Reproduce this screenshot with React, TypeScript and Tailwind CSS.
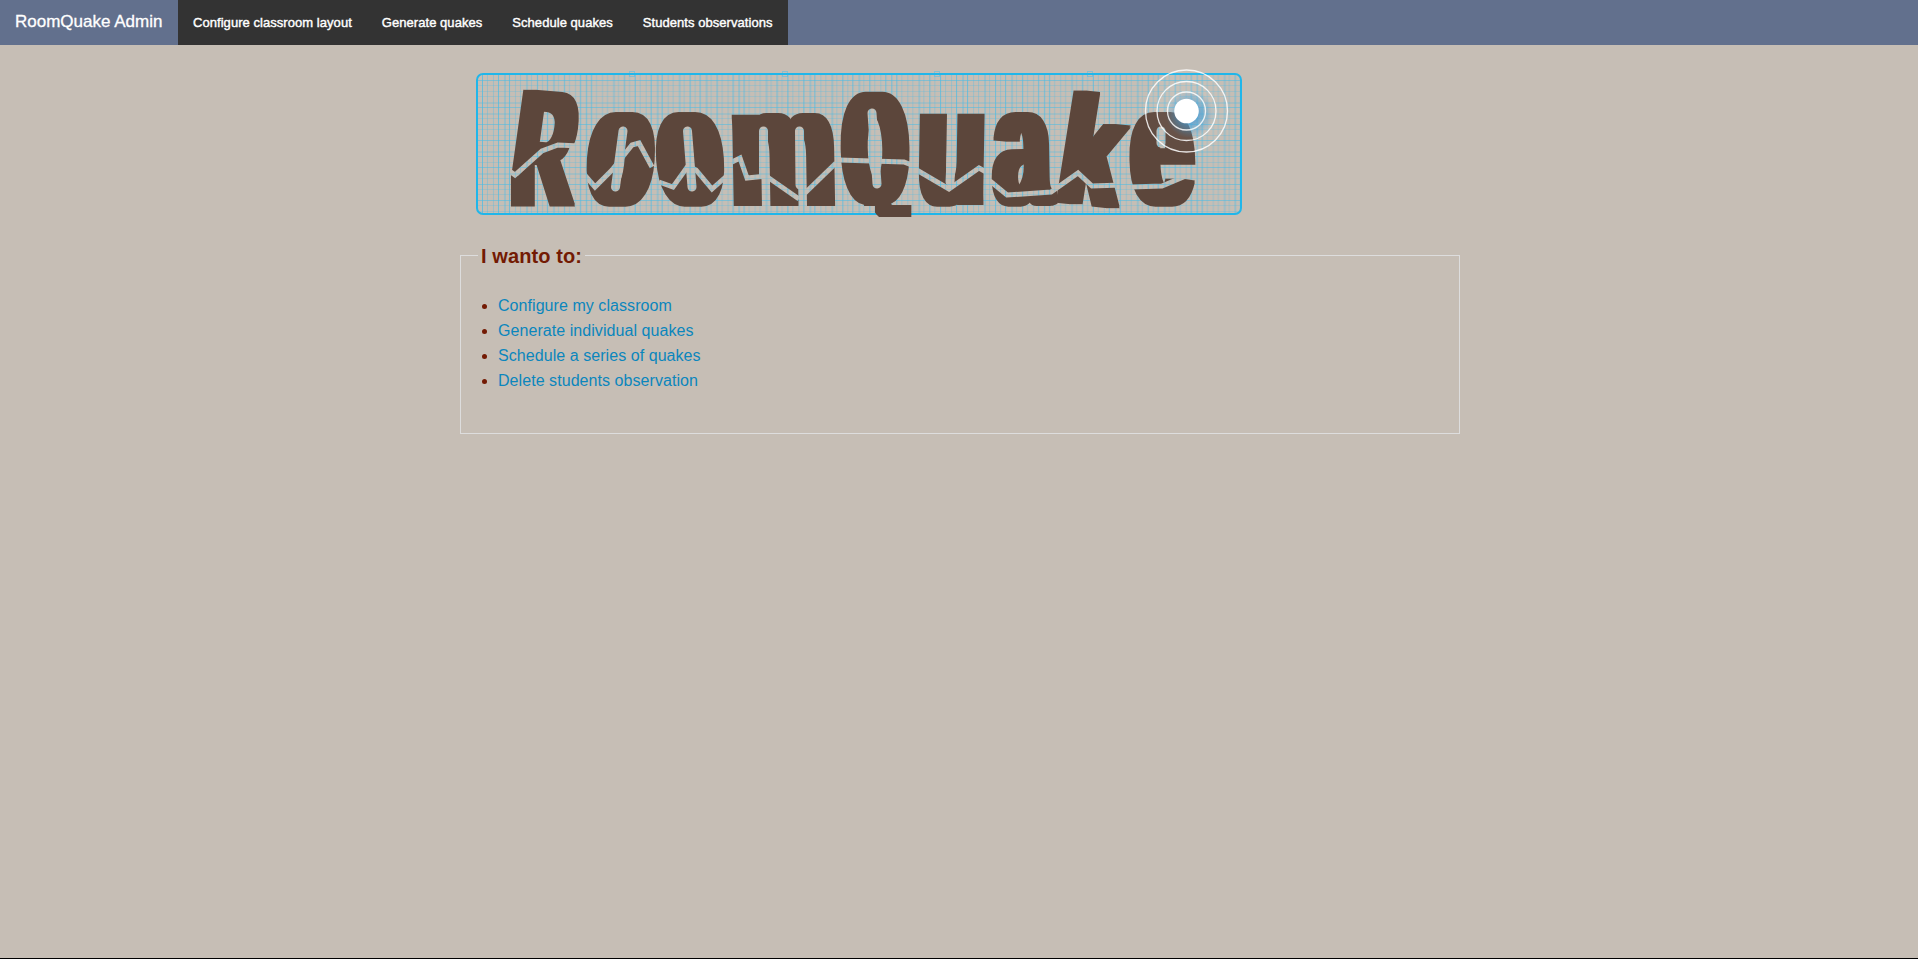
const INK = '#5c463b';

type Glyph = {
  c: string;
  x: number;
  y: number;
  sx: number;
  sy: number;
  r?: number;
  k?: number;
  w?: 'a' | 'b';
  clip?: string;
};

const glyphs: Glyph[] = [
  { c: 'R', x: 537, y: 204, sx: 0.79, sy: 1.63, r: 5, k: -3, clip: 'M490 60 H600 V146 L558 145 L542 151 L518 176 L490 160Z' },
  { c: 'R', x: 541, y: 206, sx: 0.82, sy: 1.6, clip: 'M490 240 H600 V146 L558 145 L542 151 L518 176 L490 160Z' },
  { c: 'o', x: 617.5, y: 204, sx: 0.97, sy: 1.69, k: -4, w: 'b' },
  { c: 'o', x: 693, y: 204, sx: 0.97, sy: 1.69, k: 4, w: 'b' },
  { c: 'm', x: 784, y: 205, sx: 1.18, sy: 1.69, k: 1 },
  { c: 'Q', x: 876, y: 203, sx: 0.76, sy: 1.58, k: 1, w: 'b', clip: 'M820 60 H940 V206 H820Z' },
  { c: 'Q', x: 882, y: 190, sx: 0.76, sy: 1.58, w: 'b', clip: 'M875 205 H940 V217 H879 L875 213Z' },
  { c: 'u', x: 951, y: 204, sx: 1.1, sy: 1.69, k: -1 },
  { c: 'a', x: 1023, y: 204, sx: 1, sy: 1.69, k: 1 },
  { c: 'k', x: 1084, y: 204, sx: 1.06, sy: 1.54, r: 6, k: -3 },
  { c: 'e', x: 1163, y: 204, sx: 1.03, sy: 1.69, k: 1, w: 'b' },
];

const cracks = [
  'M508 170 L515 175 L542 151 L558 145 L580 146',
  'M582 172 L595 187 L612 170 L632 145 L639 143 L652 167',
  'M659 182 L673 187 L688 166 L696 170 L712 189 L729 174',
  'M730 163 L740 158 L747 178 L766 176 L799 199',
  'M804 194 L836 163',
  'M839 160 L904 162 L914 166',
  'M915 169 L949 189 L979 168 L988 173',
  'M990 181 L1007 195 L1051 192 L1078 173 L1092 186 L1122 185',
  'M1130 187 L1162 186 L1200 170',
];

const counters = [
  'M623 131 L615.5 187',
  'M687.5 131 L692 187',
  'M872 113 L877 184',
  'M763.5 131 L763.5 175',
  'M799.5 131 L800 185',
  'M952.5 130 L950 182',
  'M1161 131 L1161 143',
];

const strong = [0, 3, 5, 10, 12, 15, 18, 19, 20, 26];
const wide = [4, 8, 13, 24];
const cols = Array.from({ length: 28 }, (_, i) => i);
const rows = Array.from({ length: 25 }, (_, i) => i);
const strongRows = [0, 5, 8, 11, 14, 16, 19, 22];
const wideRows = [4, 6, 13, 17];

function Logo() {
  return (
    <svg className="block h-[170px] w-[790px] overflow-visible" viewBox="470 60 790 170" role="img" aria-label="RoomQuake">
      <defs>
        <pattern id="grid" x="480" y="0" width="152.7" height="300" patternUnits="userSpaceOnUse">
          {cols.map((i) => (
            <rect key={i} x={Math.round(2 + i * 5.45)} y="0" width={wide.includes(i) ? 2 : 1} height="300" fill="#4dbbe4" opacity={strong.includes(i) ? 0.75 : 0.35} />
          ))}
        </pattern>
        <filter id="heavy-a" x="470" y="60" width="790" height="170" filterUnits="userSpaceOnUse" colorInterpolationFilters="sRGB">
          <feMorphology operator="dilate" radius="6 1" />
        </filter>
        <filter id="heavy-b" x="470" y="60" width="790" height="170" filterUnits="userSpaceOnUse" colorInterpolationFilters="sRGB">
          <feMorphology operator="dilate" radius="8 1" />
        </filter>
        <mask id="fracture" x="470" y="60" width="790" height="170" maskUnits="userSpaceOnUse">
          <rect x="470" y="60" width="790" height="170" fill="white" />
          <g fill="none" stroke="black">
            {cracks.map((d) => <path key={d} d={d} strokeWidth="5" />)}
            {counters.map((d) => <path key={d} d={d} strokeWidth="9" strokeLinecap="round" />)}
          </g>
        </mask>
        <radialGradient id="glow">
          <stop offset="0.3" stopColor="#2b8fd0" stopOpacity="0.75" />
          <stop offset="1" stopColor="#2b8fd0" stopOpacity="0" />
        </radialGradient>
      </defs>
      <rect x="477" y="74" width="764" height="140" rx="5" fill="url(#grid)" />
      {rows.map((i) => (
        <rect key={i} x="477" y={Math.round(80 + i * 5.45)} width="764" height={wideRows.includes(i) ? 2 : 1} fill="#4dbbe4" opacity={strongRows.includes(i) ? 0.55 : 0.25} />
      ))}
      {[629.5, 782.5, 934.5, 1087.5].map((x) => (
        <rect key={x} x={x} y="71.5" width="5" height="5" fill="none" stroke="#4dbbe4" strokeOpacity=".5" />
      ))}
      <rect x="477" y="74" width="764" height="140" rx="6" fill="none" stroke="#20b6ea" strokeWidth="2" />
      <g mask="url(#fracture)">
        {glyphs.map((g, i) => (
          <g key={i} clipPath={g.clip ? `url(#piece-${i})` : undefined}>
            {g.clip && <clipPath id={`piece-${i}`}><path d={g.clip} /></clipPath>}
            <g filter={g.w === 'b' ? 'url(#heavy-b)' : 'url(#heavy-a)'}>
              <text
                fill={INK}
                fontFamily="Liberation Sans, sans-serif"
                fontWeight="700"
                fontSize="100"
                textAnchor="middle"
                transform={`translate(${g.x} ${g.y}) rotate(${g.r ?? 0}) skewX(${g.k ?? 0}) scale(${g.sx} ${g.sy})`}
              >
                {g.c}
              </text>
            </g>
          </g>
        ))}
      </g>
      <circle cx="1190" cy="114" r="24" fill="url(#glow)" />
      <g fill="#ffffff" fillOpacity=".04" stroke="#ffffff" strokeOpacity=".85" strokeWidth="1.3">
        <circle cx="1186.5" cy="111" r="19" />
        <circle cx="1186.5" cy="111" r="29.5" />
        <circle cx="1186.5" cy="111" r="41" />
      </g>
      <circle cx="1186.5" cy="111" r="12.3" fill="white" />
    </svg>
  );
}

const tabs = ['Configure classroom layout', 'Generate quakes', 'Schedule quakes', 'Students observations'];
const actions = ['Configure my classroom', 'Generate individual quakes', 'Schedule a series of quakes', 'Delete students observation'];

export default function App() {
  return (
    <div className="flex h-[959px] flex-col overflow-hidden border-b border-black bg-[#c6beb5] font-['Liberation_Sans',sans-serif]">
      <nav className="flex h-[45px] shrink-0 bg-[#62708d] text-white">
        <h1 className="w-[178px] pl-[15px] text-[17px] leading-[43px] [-webkit-text-stroke:0.3px_white]">RoomQuake Admin</h1>
        <ul className="flex h-full bg-[#333333] text-[13px] leading-[45px] tracking-[0.05px] [-webkit-text-stroke:0.4px_white]">
          {tabs.map((t) => <li key={t} className="px-[15px]">{t}</li>)}
        </ul>
      </nav>
      <main className="ml-[460px] w-[1000px] pt-[15px]">
        <div className="ml-[10px]"><Logo /></div>
        <fieldset className="mt-3 h-[192px] border border-[#dddddd] px-[17px]">
          <legend className="px-[3px] pt-[2px] text-[20px] leading-[24px] font-bold tracking-[0.1px] text-[#731a03]">I wanto to:</legend>
          <ul className="mt-[25px] ml-[20px] list-disc text-[16px] leading-[25px] tracking-[0.06px] text-[#731a03]">
            {actions.map((a) => <li key={a}><a className="text-[#0b86bd]">{a}</a></li>)}
          </ul>
        </fieldset>
      </main>
    </div>
  );
}
